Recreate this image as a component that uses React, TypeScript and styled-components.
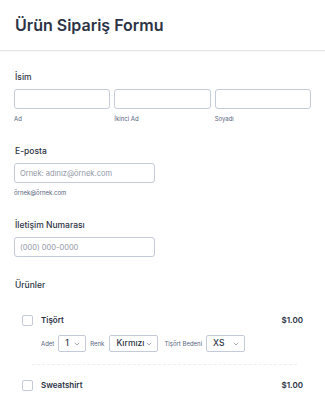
import React from "react";
import styled, { createGlobalStyle } from "styled-components";

const GlobalStyle = createGlobalStyle`
  body {
    margin: 0;
    background: #ffffff;
    font-family: Inter, "Liberation Sans", sans-serif;
    color: #2c3345;
  }
`;

const Page = styled.div`
  width: 325px;
  height: 400px;
  overflow: hidden;
  background: #fff;
`;

const Header = styled.div`
  padding: 15px 15px 15px;
  border-bottom: 1px solid #e6e6ea;
  box-shadow: 0 1px 1px rgba(0, 0, 0, 0.03);
`;

const Title = styled.h1`
  margin: 0;
  font-size: 16px;
  font-weight: 600;
  line-height: 20px;
  color: #2c3345;
`;

const Body = styled.div`
  padding: 20px 14px 0;
  display: flex;
  flex-direction: column;
`;

const Field = styled.div<{ $gap?: number }>`
  display: flex;
  flex-direction: column;
  margin-bottom: ${(p) => p.$gap ?? 22}px;
`;

const Label = styled.label`
  font-size: 8.5px;
  font-weight: 500;
  line-height: 12px;
  margin: 0 0 6px 1px;
  color: #2c3345;
`;

const Row = styled.div`
  display: flex;
  gap: 4px;
`;

const Col = styled.div`
  flex: 1;
  display: flex;
  flex-direction: column;
`;

const Input = styled.input<{ $w?: number }>`
  box-sizing: border-box;
  width: ${(p) => (p.$w ? `${p.$w}px` : "100%")};
  height: 20px;
  border: 1px solid #c3cad8;
  border-radius: 3px;
  padding: 0 5px;
  font-family: inherit;
  font-size: 7.5px;
  color: #2c3345;
  &::placeholder {
    color: #8f96a3;
  }
`;

const Sub = styled.span`
  font-size: 6px;
  color: #57647e;
  margin-top: 6px;
  line-height: 8px;
`;

const Products = styled.div`
  display: flex;
  flex-direction: column;
  padding-top: 17px;
`;

const ProductRow = styled.div`
  display: flex;
  align-items: center;
  padding: 0 8px;
  height: 12px;
`;

const Check = styled.span`
  box-sizing: border-box;
  width: 11px;
  height: 11px;
  border: 1px solid #c3cad8;
  border-radius: 2px;
  margin-right: 8px;
`;

const ProductName = styled.span`
  font-size: 8px;
  font-weight: 600;
  flex: 1;
`;

const Price = styled.span`
  font-size: 8px;
  font-weight: 600;
`;

const Options = styled.div`
  display: flex;
  align-items: center;
  padding-left: 27px;
  margin-top: 9px;
  gap: 4px;
  line-height: 1;
`;

const OptLabel = styled.span<{ $after?: number }>`
  font-size: 6px;
  color: #57647e;
  margin-right: ${(p) => p.$after ?? 0}px;
`;

const Select = styled.div<{ $w: number; $after?: number }>`
  box-sizing: border-box;
  flex: none;
  width: ${(p) => p.$w}px;
  height: 17px;
  margin-right: ${(p) => p.$after ?? 0}px;
  border: 1px solid #c3cad8;
  border-radius: 2px;
  display: flex;
  align-items: center;
  justify-content: space-between;
  padding: 0 5px 0 6px;
  font-size: 8.5px;
  font-weight: 500;
  color: #2c3345;
`;

const Divider = styled.div`
  margin: 12px 14px 14px 18px;
  border-top: 1px dashed #eceef3;
`;

const Chevron = () => (
  <svg width="6" height="4" viewBox="0 0 6 4">
    <path d="M0.8 0.8 L3 3 L5.2 0.8" fill="none" stroke="#8f96a3" strokeWidth="0.8" />
  </svg>
);

const App = () => {
  return (
    <Page>
      <GlobalStyle />
      <Header>
        <Title>Ürün Sipariş Formu</Title>
      </Header>
      <Body>
        <Field>
          <Label>İsim</Label>
          <Row>
            <Col>
              <Input />
              <Sub>Ad</Sub>
            </Col>
            <Col>
              <Input />
              <Sub>İkinci Ad</Sub>
            </Col>
            <Col>
              <Input />
              <Sub>Soyadı</Sub>
            </Col>
          </Row>
        </Field>
        <Field>
          <Label>E-posta</Label>
          <Input $w={141} placeholder="Örnek: adınız@örnek.com" />
          <Sub>örnek@örnek.com</Sub>
        </Field>
        <Field $gap={22}>
          <Label>İletişim Numarası</Label>
          <Input $w={141} placeholder="(000) 000-0000" />
        </Field>
        <Label>Ürünler</Label>
        <Products>
          <ProductRow>
            <Check />
            <ProductName>Tişört</ProductName>
            <Price>$1.00</Price>
          </ProductRow>
          <Options>
            <OptLabel>Adet</OptLabel>
            <Select $w={28}>
              1 <Chevron />
            </Select>
            <OptLabel $after={1}>Renk</OptLabel>
            <Select $w={49} $after={2}>
              Kırmızı <Chevron />
            </Select>
            <OptLabel>Tişört Bedeni</OptLabel>
            <Select $w={39}>
              XS <Chevron />
            </Select>
          </Options>
          <Divider />
          <ProductRow>
            <Check />
            <ProductName>Sweatshirt</ProductName>
            <Price>$1.00</Price>
          </ProductRow>
          <Options>
            <OptLabel>Adet</OptLabel>
            <Select $w={28}>
              1 <Chevron />
            </Select>
            <OptLabel $after={1}>Renk</OptLabel>
            <Select $w={49} $after={2}>
              Kırmızı <Chevron />
            </Select>
            <OptLabel>Sweatshirt Bedeni</OptLabel>
            <Select $w={38}>
              XS <Chevron />
            </Select>
          </Options>
        </Products>
      </Body>
    </Page>
  );
};

export default App;
